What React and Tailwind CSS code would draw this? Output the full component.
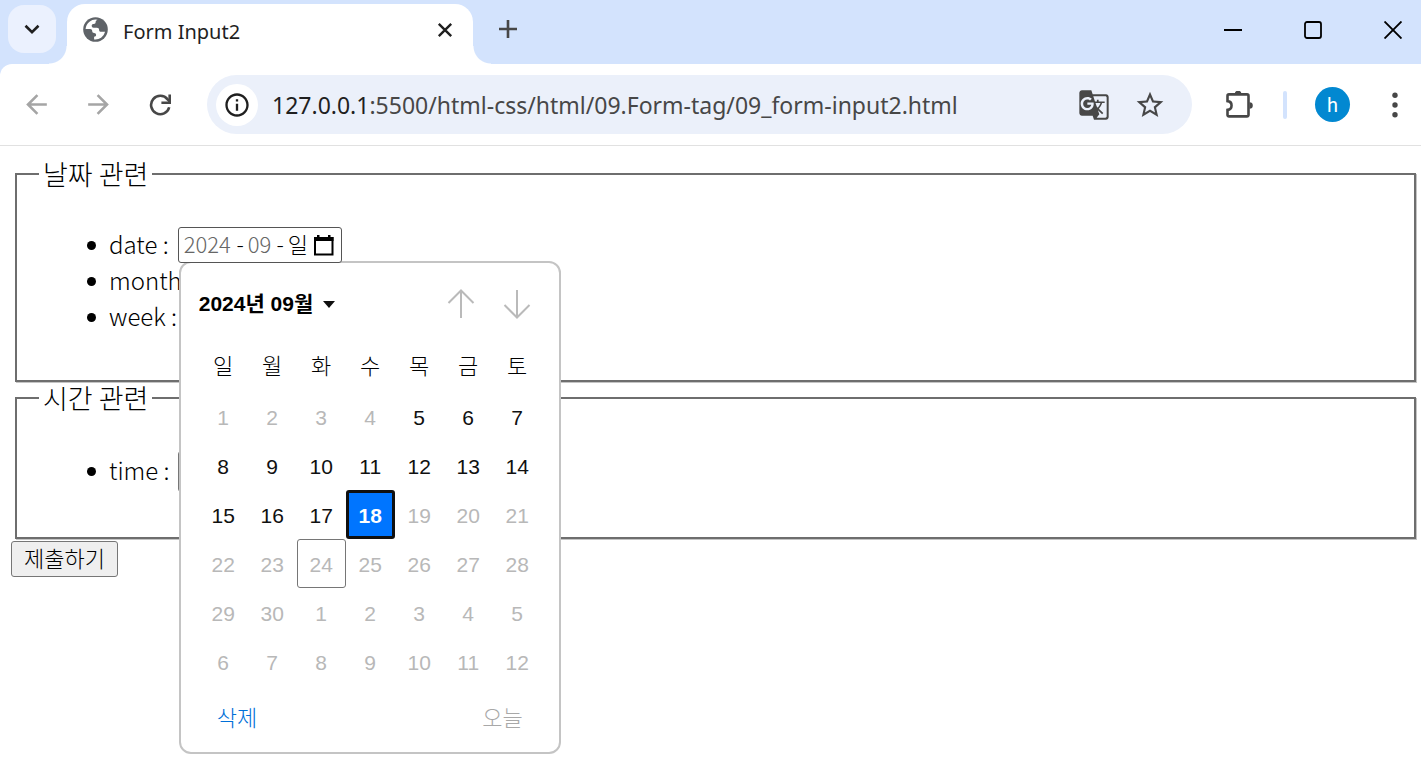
import React from "react";
import { MdGTranslate, MdStarBorder, MdArrowBack, MdArrowForward, MdInfoOutline } from "react-icons/md";

const WEEKDAYS = ["일", "월", "화", "수", "목", "금", "토"];
const WEEKS = [
  [1, 2, 3, 4, 5, 6, 7],
  [8, 9, 10, 11, 12, 13, 14],
  [15, 16, 17, 18, 19, 20, 21],
  [22, 23, 24, 25, 26, 27, 28],
  [29, 30, 1, 2, 3, 4, 5],
  [6, 7, 8, 9, 10, 11, 12],
];
const SELECTED = 17;
const TODAY = 23;

function TabStrip() {
  return (
    <header className="flex h-16 items-start bg-[#d3e3fd]">
      <button aria-label="탭 검색" className="mt-[5px] ml-2 flex size-12 items-center justify-center rounded-2xl bg-[#ebf1fe]">
        <svg viewBox="0 0 16 16" className="size-4" fill="none" stroke="#1f1f1f" strokeWidth="2.6">
          <path d="M1.5 4.8 8 11.2l6.5-6.4" />
        </svg>
      </button>
      <div className="relative mt-1 ml-[11px] flex h-[60px] w-[406px] items-center rounded-t-[18px] bg-white pr-5 pl-4 before:absolute before:bottom-0 before:-left-[18px] before:size-[18px] before:bg-[radial-gradient(circle_at_0_0,transparent_17px,#fff_18px)] after:absolute after:-right-[18px] after:bottom-0 after:size-[18px] after:bg-[radial-gradient(circle_at_100%_0,transparent_17px,#fff_18px)]">
        <svg viewBox="0 0 25 25" className="mb-[9px] size-[25px]">
          <circle cx="12.5" cy="12.5" r="12.3" fill="#5f6368" />
          <path
            fill="#fff"
            d="M14.6 2.8c-1.4.6-2 1.500-2 2.500 0 1.200-.6 1.700-1.800 1.700-1.400 0-2.100.6-2.100 1.800 0 1.300.6 1.900 1.900 1.900h3.300c1.500 0 2.200.8 2.200 2.200 0 1.300.8 1.900 2.100 1.900h3.900a10 10 0 0 1-11 7.600v-2.600c1.300 0 2-.6 2-1.700 0-1.300-.7-2-2-2-1.200 0-1.900-.8-1.900-2 0-1.400-.8-2.100-2-2.100H2.600A10 10 0 0 1 14.600 2.800Z"
          />
        </svg>
        <span className="mb-1 ml-[15px] flex-1 font-['Noto_Sans','Noto_Sans_CJK_KR',sans-serif] text-xl leading-6 text-[#1f1f1f]">Form Input2</span>
        <button aria-label="탭 닫기" className="mb-[9px] flex size-4 items-center justify-center">
          <svg viewBox="0 0 16 16" className="size-4" stroke="#1f1f1f" strokeWidth="2.4">
            <path d="m1.8 1.8 12.4 12.4M14.2 1.8 1.8 14.2" />
          </svg>
        </button>
      </div>
      <button aria-label="새 탭" className="mt-[5px] ml-[11px] flex size-12 items-center justify-center">
        <svg viewBox="0 0 18 18" className="size-[18px]" stroke="#474747" strokeWidth="2.6">
          <path d="M0 9h18M9 0v18" />
        </svg>
      </button>
      <div className="ml-auto flex h-[60px] gap-6">
        <button aria-label="최소화" className="flex w-14 items-center justify-center">
          <svg viewBox="0 0 18 18" className="size-[18px]" stroke="#000" strokeWidth="2">
            <path d="M0 9h18" />
          </svg>
        </button>
        <button aria-label="최대화" className="flex w-14 items-center justify-center">
          <svg viewBox="0 0 18 18" className="size-[18px]" fill="none" stroke="#000" strokeWidth="1.8">
            <rect x="1" y="1" width="16" height="16" rx="2" />
          </svg>
        </button>
        <button aria-label="닫기" className="flex w-14 items-center justify-center">
          <svg viewBox="0 0 18 18" className="size-[18px]" stroke="#000" strokeWidth="1.9">
            <path d="m.5.5 17 17M17.5.5l-17 17" />
          </svg>
        </button>
      </div>
    </header>
  );
}

function Toolbar() {
  return (
    <div className="bg-[#d3e3fd]">
      <nav className="flex h-[82px] items-center rounded-tl-xl border-b border-[#e1e1e1] bg-white pl-[5px]">
        <button aria-label="뒤로" className="flex w-[62px] justify-center text-[#a5a5a5]">
          <MdArrowBack size={31} />
        </button>
        <button aria-label="앞으로" className="flex w-[62px] justify-center text-[#a5a5a5]">
          <MdArrowForward size={31} />
        </button>
        <button aria-label="새로고침" className="flex w-[62px] justify-center text-[#474747]">
          <svg viewBox="0 0 22 22" className="size-[22px]" fill="none" stroke="#474747" strokeWidth="2.600">
            <path d="M20.200 13.200A9.200 9.200 0 1 1 18.600 5.400l2 2" />
            <path d="M20.700.5v8.300h-8.300" />
          </svg>
        </button>
        <div className="ml-4 flex h-[59px] min-w-0 flex-1 items-center rounded-full bg-[#ebf0fa] pr-[26px] pl-[9px]">
          <button aria-label="사이트 정보 보기" className="flex size-[42px] shrink-0 items-center justify-center rounded-full bg-white text-[#1f1f1f]">
            <MdInfoOutline size={28} />
          </button>
          <a href="#url" className="ml-[14px] min-w-0 flex-1 truncate font-['Noto_Sans',sans-serif] text-[23px] leading-8 text-[#474747]">
            <span className="text-[#1f1f1f]">127.0.0.1</span>:5500/html-css/html/09.Form-tag/09_form-input2.html
          </a>
          <button aria-label="이 페이지 번역하기" className="text-[#474747]">
            <MdGTranslate size={32} />
          </button>
          <button aria-label="북마크에 추가" className="ml-6 text-[#474747]">
            <MdStarBorder size={32} />
          </button>
        </div>
        <button aria-label="확장 프로그램" className="ml-4 flex w-16 justify-center">
          <svg viewBox="0 0 28 28" className="size-7">
            <path
              d="M3 3.400h18a1.500 1.500 0 0 1 1.500 1.500v19a1.500 1.500 0 0 1-1.500 1.500H3a1.500 1.500 0 0 1-1.500-1.500v-5c5.400-.4 5.400-8.400 0-8.800V4.900A1.500 1.500 0 0 1 3 3.400Z"
              fill="none"
              stroke="#474747"
              strokeWidth="2.600"
            />
            <path d="M8.800 3a3.300 3.300 0 0 1 6.600 0ZM23.500 11.200a3.300 3.300 0 0 1 0 6.600Z" fill="#474747" />
          </svg>
        </button>
        <span className="ml-[11px] h-7 w-1 rounded-full bg-[#d3e3fd]" />
        <button aria-label="프로필" className="ml-7 flex size-[35px] items-center justify-center rounded-full bg-[#0288d1] font-[Roboto,sans-serif] text-xl text-white">
          h
        </button>
        <button aria-label="메뉴" className="ml-[19px] flex w-[52px] justify-center">
          <svg viewBox="0 0 6 26" className="h-[26px] w-1.5" fill="#474747">
            <circle cx="3" cy="3.200" r="2.700" />
            <circle cx="3" cy="13" r="2.700" />
            <circle cx="3" cy="22.800" r="2.700" />
          </svg>
        </button>
      </nav>
    </div>
  );
}

function Day({ day, index }) {
  const enabled = index >= 4 && index <= 17;
  if (index === SELECTED) {
    return (
      <button aria-pressed="true" className="block size-[49px] rounded-[3px] border-[3px] border-[#101010] bg-[#0075ff] pt-0.5 font-bold text-white">
        {day}
      </button>
    );
  }
  if (index === TODAY) {
    return (
      <button disabled className="block size-[49px] rounded-[3px] border border-[#767676] pt-0.5 text-[#b8b8b8]">
        {day}
      </button>
    );
  }
  return (
    <button disabled={!enabled} className={enabled ? "block size-[49px] pt-0.5 text-[#101010]" : "block size-[49px] pt-0.5 text-[#b8b8b8]"}>
      {day}
    </button>
  );
}

function Calendar() {
  return (
    <div
      role="dialog"
      aria-label="날짜 선택"
      className="absolute top-[34px] left-px z-10 w-[382px] rounded-xl border-2 border-[#c4c4c4] bg-white font-['Liberation_Sans','Noto_Sans_CJK_KR',sans-serif] text-[21px] leading-6"
    >
      <div className="flex h-20 items-center pt-0.5 pr-7 pl-[18px]">
        <button className="flex items-center gap-[10px] font-bold text-black">
          2024년 09월
          <svg viewBox="0 0 12 7" className="h-[7px] w-3" fill="#101010">
            <path d="M0 0h12L6 7Z" />
          </svg>
        </button>
        <button aria-label="이전 달" className="ml-auto">
          <svg viewBox="0 0 28 30" className="h-[30px] w-7" fill="none" stroke="#bababa" strokeWidth="2">
            <path d="M14 29V2M1.500 14 14 1.500 26.500 14" />
          </svg>
        </button>
        <button aria-label="다음 달" className="ml-7">
          <svg viewBox="0 0 28 30" className="h-[30px] w-7" fill="none" stroke="#bababa" strokeWidth="2">
            <path d="M14 1v27M1.500 16 14 28.500 26.500 16" />
          </svg>
        </button>
      </div>
      <table className="ml-[18px] border-collapse text-center">
        <thead>
          <tr className="h-[49px]">
            {WEEKDAYS.map((name) => (
              <th key={name} scope="col" className="w-[49px] p-0 pb-px text-[22px] font-light text-black">
                {name}
              </th>
            ))}
          </tr>
        </thead>
        <tbody>
          {WEEKS.map((week, row) => (
            <tr key={row}>
              {week.map((day, column) => (
                <td key={column} className="p-0">
                  <Day day={day} index={row * 7 + column} />
                </td>
              ))}
            </tr>
          ))}
        </tbody>
      </table>
      <div className="flex h-[66px] items-center justify-between px-9 text-[22px] font-light">
        <button className="text-[#0070d8]">삭제</button>
        <button disabled className="text-[#a8a8a8]">오늘</button>
      </div>
    </div>
  );
}

function DateField() {
  return (
    <div className="relative ml-px">
      <div role="group" aria-label="date" className="relative z-20 flex h-9 w-[164px] items-center rounded-[3px] border border-[#555] bg-white pr-[7px] pl-[5px] font-['Noto_Sans_CJK_KR',sans-serif] text-[22px] font-light">
        <input id="date" aria-label="년" defaultValue="2024" className="w-[49px] pb-0.5 text-[#666] outline-none" />
        <span className="w-[15px] pb-0.5 text-center">-</span>
        <input aria-label="월" defaultValue="09" className="w-[25px] pb-0.5 text-[#666] outline-none" />
        <span className="w-[15px] pb-0.5 text-center">-</span>
        <input aria-label="일" defaultValue="일" className="w-[21px] pb-0.5 text-black outline-none" />
        <button aria-label="달력 열기" className="ml-auto">
          <svg viewBox="0 0 20 21" className="h-[21px] w-5">
            <path d="M1 3h17.500v16.500H1Z" fill="none" stroke="#000" strokeWidth="2" />
            <path d="M0 2h19.500v4H0ZM3 0h2.500v3H3ZM14 0h2.500v3H14Z" fill="#000" />
          </svg>
        </button>
      </div>
      <Calendar />
    </div>
  );
}

function Row({ id, label, children }) {
  return (
    <li className="flex min-h-9 items-center before:mr-[13px] before:size-[9px] before:rounded-full before:bg-black">
      <label htmlFor={id} className="mr-2 pb-[3px] leading-8 whitespace-pre">{label} :</label>
      {children}
    </li>
  );
}

const fieldsetClass = "border-2 border-[#6e6e6e] pl-[22px] shadow-[1px_1px_0_#c4c4c4]";
const legendClass = "px-1 text-[27px] leading-8";
const listClass = "pt-[37px] pb-[45px] pl-12";
const inputClass = "w-40 rounded-[3px] border border-[#767676] bg-white";

export default function App() {
  return (
    <div className="min-h-screen bg-white">
      <TabStrip />
      <Toolbar />
      <main>
        <form className="pt-3 pr-[5px] pl-[15px] font-['Noto_Sans_CJK_KR',sans-serif] text-2xl font-light text-black">
          <fieldset className={fieldsetClass}>
            <legend className={legendClass}>날짜 관련</legend>
            <ul className={listClass}>
              <Row id="date" label="date">
                <DateField />
              </Row>
              <Row id="month" label="month">
                <input id="month" className={`${inputClass} h-8`} />
              </Row>
              <Row id="week" label="week">
                <input id="week" className={`${inputClass} h-8`} />
              </Row>
            </ul>
          </fieldset>
          <fieldset className={fieldsetClass}>
            <legend className={legendClass}>시간 관련</legend>
            <ul className={listClass}>
              <Row id="time" label="time">
                <input id="time" className={`${inputClass} h-[41px]`} />
              </Row>
            </ul>
          </fieldset>
          <button type="submit" className="-ml-1 mt-0.5 block h-9 rounded-[3px] border border-[#767676] bg-[#efefef] px-3 pb-1 text-[22px] leading-7">
            제출하기
          </button>
        </form>
      </main>
    </div>
  );
}
